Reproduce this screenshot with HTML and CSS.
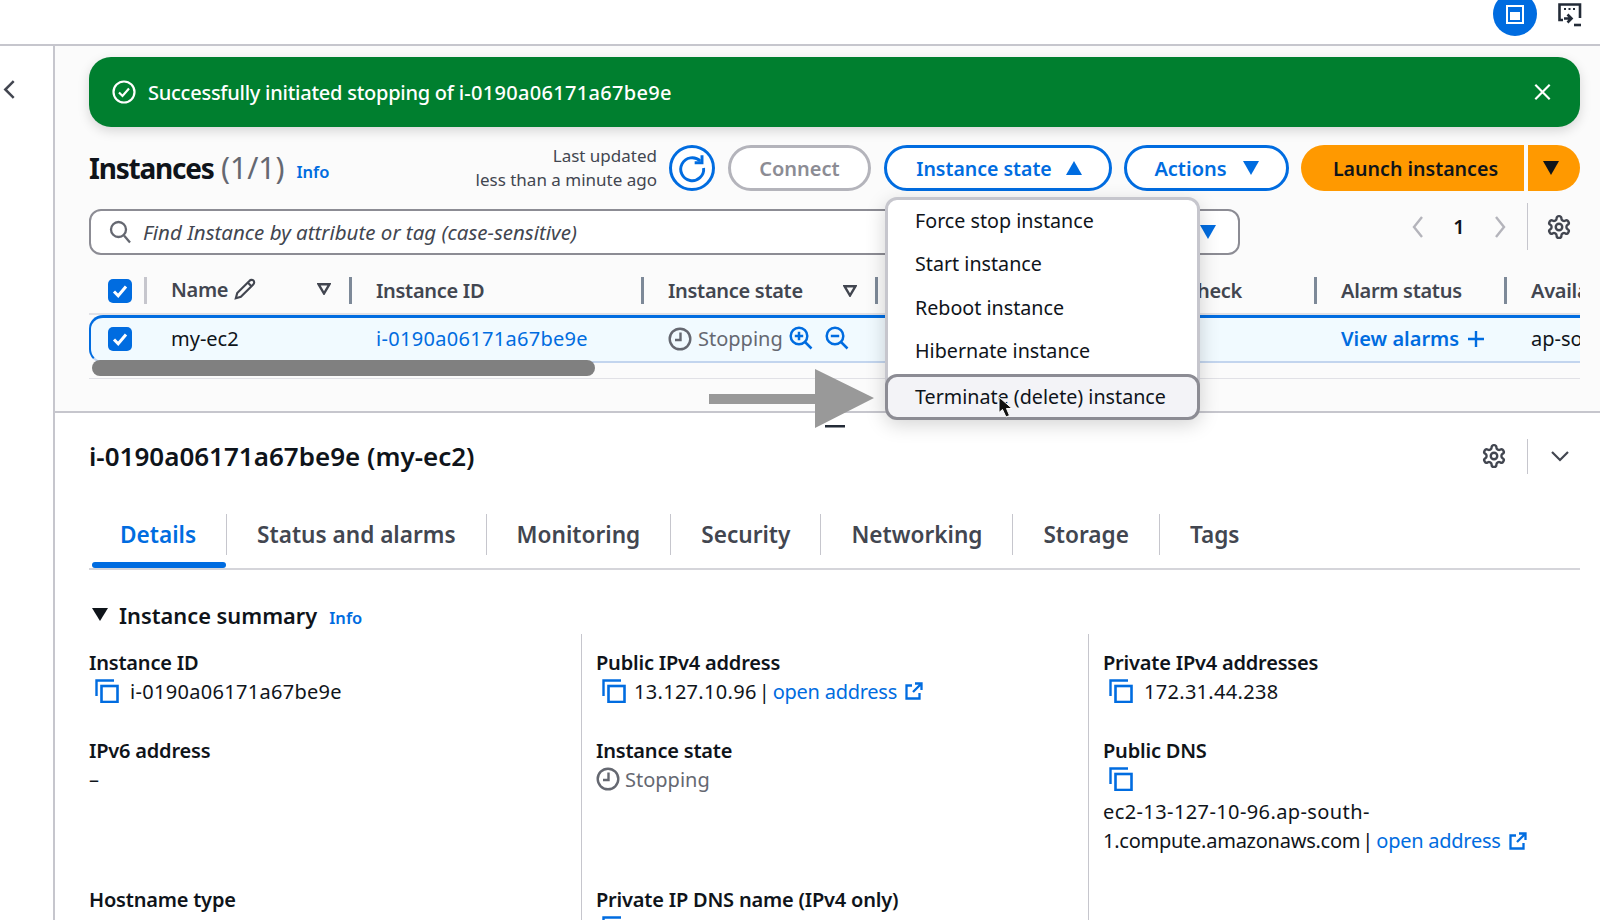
FILE: index.html
```html
<!DOCTYPE html>
<html lang="en">
<head>
    <meta charset="UTF-8">
    <title>Instances | EC2</title>
    <link rel="stylesheet" href="styles.css">
</head>
<body>

<svg class="icon-defs" aria-hidden="true">
    <symbol id="i-copy" viewBox="0 0 24 24"><path d="M1.5 17V1.5H19" fill="none" stroke="currentColor" stroke-width="2.4"/><rect x="6.5" y="7" width="16" height="16" fill="none" stroke="currentColor" stroke-width="2.6"/></symbol>
    <symbol id="i-ext" viewBox="0 0 18 18"><path d="M7 3.5H1.5V16.5H14.5V11M8 10L16 2M10 1.5H16.5V8" fill="none" stroke="currentColor" stroke-width="2.3"/></symbol>
    <symbol id="i-clock" viewBox="0 0 24 24"><circle cx="12" cy="12" r="10.3" fill="none" stroke="currentColor" stroke-width="2.4"/><path d="M12.5 5.5V13H7" fill="none" stroke="currentColor" stroke-width="2.4"/></symbol>
    <symbol id="i-gear" viewBox="0 0 24 24"><path d="M12.22 2h-.44a2 2 0 0 0-2 2v.18a2 2 0 0 1-1 1.73l-.43.25a2 2 0 0 1-2 0l-.15-.08a2 2 0 0 0-2.73.73l-.22.38a2 2 0 0 0 .73 2.73l.15.1a2 2 0 0 1 1 1.72v.51a2 2 0 0 1-1 1.74l-.15.09a2 2 0 0 0-.73 2.73l.22.38a2 2 0 0 0 2.73.73l.15-.08a2 2 0 0 1 2 0l.43.25a2 2 0 0 1 1 1.73V20a2 2 0 0 0 2 2h.44a2 2 0 0 0 2-2v-.18a2 2 0 0 1 1-1.73l.43-.25a2 2 0 0 1 2 0l.15.08a2 2 0 0 0 2.73-.73l.22-.39a2 2 0 0 0-.73-2.73l-.15-.08a2 2 0 0 1-1-1.74v-.5a2 2 0 0 1 1-1.74l.15-.09a2 2 0 0 0 .73-2.73l-.22-.38a2 2 0 0 0-2.73-.73l-.15.08a2 2 0 0 1-2 0l-.43-.25a2 2 0 0 1-1-1.73V4a2 2 0 0 0-2-2z" fill="none" stroke="currentColor" stroke-width="2.2"/><circle cx="12" cy="12" r="3" fill="none" stroke="currentColor" stroke-width="2.2"/></symbol>
    <symbol id="i-check" viewBox="0 0 24 24"><rect width="24" height="24" rx="5" fill="#006ce0"/><path d="M6 12.5l4.2 4.2L18 7.5" fill="none" stroke="#fff" stroke-width="3"/></symbol>
    <symbol id="i-filter" viewBox="0 0 14 12"><path d="M1.5 1.2H12.5L7 10.5Z" fill="none" stroke="currentColor" stroke-width="2.4"/></symbol>
</svg>

<div class="page">
    <header class="topbar">
        <svg class="top-circle" viewBox="0 0 44 44">
            <circle cx="22" cy="22" r="22" fill="#006ce0"/>
            <rect x="13" y="13" width="18" height="19" fill="#fff"/>
            <rect x="15" y="15" width="14" height="15" fill="#006ce0"/>
            <rect x="17" y="20" width="10" height="8" fill="#fff"/>
        </svg>
        <svg class="top-shell" viewBox="0 0 24 24" fill="none" stroke="#232b37" stroke-width="2.6">
            <path d="M5 17H1.5V1.5H22V15"/>
            <path d="M6 6h2M10.5 6h2M15 6h2" stroke-width="2"/>
            <path d="M6 15.5h7M9.500 11.500l4 4-4 4"/>
            <path d="M16 22h7"/>
        </svg>
    </header>

    <div class="layout">
        <aside class="sidebar">
            <svg class="side-back" viewBox="0 0 12 20"><path d="M10 2L2 10l8 8" fill="none" stroke="#424650" stroke-width="2.4"/></svg>
        </aside>

        <main class="content">
            <section class="upper">
                <div class="flash">
                    <svg class="flash-icon" viewBox="0 0 24 24" fill="none" stroke="#fff" stroke-width="2.2"><circle cx="12" cy="12" r="10.5"/><path d="M7 12.5l3.500 3.500L17 8.500"/></svg>
                    <span class="flash-text">Successfully initiated stopping of <span class="id">i-0190a06171a67be9e</span></span>
                    <svg class="flash-close" viewBox="0 0 20 20"><path d="M2 2l16 16M18 2L2 18" stroke="#fff" stroke-width="2.4"/></svg>
                </div>

                <div class="head-row">
                    <h1 class="page-title"><span class="title-word">Instances</span> <span class="count">(1/1)</span></h1>
                    <a class="info info-title">Info</a>
                    <div class="updated">Last updated<br>less than a minute ago</div>
                    <button class="refresh">
                        <svg viewBox="0 0 24 24" fill="none" stroke="#006ce0" stroke-width="2.2"><path d="M18.2 6.800A8.600 8.600 0 1 0 20.700 12"/><path d="M19.500 2.500V8H14"/></svg>
                    </button>
                    <button class="btn btn-off">Connect</button>
                    <div class="menu-anchor">
                        <button class="btn btn-state">Instance state <svg class="caret" viewBox="0 0 16 14"><path d="M8 0l8 14H0z" fill="currentColor"/></svg></button>
                        <ul class="menu">
                            <li>Force stop instance</li>
                            <li>Start instance</li>
                            <li>Reboot instance</li>
                            <li>Hibernate instance</li>
                            <li class="menu-hover">Terminate (delete) instance</li>
                        </ul>
                    </div>
                    <button class="btn btn-actions">Actions <svg class="caret" viewBox="0 0 16 14"><path d="M8 14L16 0H0z" fill="currentColor"/></svg></button>
                    <div class="launch">
                        <button class="launch-main">Launch instances</button>
                        <button class="launch-more"><svg class="caret" viewBox="0 0 16 14"><path d="M8 14L16 0H0z" fill="currentColor"/></svg></button>
                    </div>
                </div>

                <div class="search-row">
                    <div class="search">
                        <svg class="search-icon" viewBox="0 0 22 24" fill="none" stroke="#656871" stroke-width="2.3"><circle cx="9.500" cy="9.500" r="7.500"/><path d="M15 15.500l6 7"/></svg>
                        <span class="search-hint">Find Instance by attribute or tag (case-sensitive)</span>
                        <svg class="caret search-caret" viewBox="0 0 16 14"><path d="M8 14L16 0H0z" fill="currentColor"/></svg>
                    </div>
                    <div class="pager">
                        <svg class="pager-arrow" viewBox="0 0 12 24"><path d="M10 2L2 12l8 10" fill="none" stroke="#b4b4bb" stroke-width="2.4"/></svg>
                        <span class="pager-num">1</span>
                        <svg class="pager-arrow" viewBox="0 0 12 24"><path d="M2 2l8 10-8 10" fill="none" stroke="#b4b4bb" stroke-width="2.4"/></svg>
                        <span class="pager-sep"></span>
                        <svg class="gear"><use href="#i-gear"/></svg>
                    </div>
                </div>

                <div class="table">
                    <div class="t-row t-head">
                        <div class="cell cell-check cell-light"><svg class="check"><use href="#i-check"/></svg></div>
                        <div class="cell cell-name">Name
                            <svg class="pencil" viewBox="0 0 24 24" fill="none" stroke="#424650" stroke-width="2.3"><path d="M17 3a2.850 2.830 0 1 1 4 4L7.500 20.500 2 22l1.500-5.500Z"/><path d="M15 5l4 4"/></svg>
                            <svg class="filter"><use href="#i-filter"/></svg>
                        </div>
                        <div class="cell">Instance ID</div>
                        <div class="cell">Instance state <svg class="filter"><use href="#i-filter"/></svg></div>
                        <div class="cell cell-end">Status check</div>
                        <div class="cell">Alarm status</div>
                        <div class="cell cell-last">Availability Zone</div>
                    </div>
                    <div class="t-row t-body">
                        <div class="cell-plain cell-check"><svg class="check"><use href="#i-check"/></svg></div>
                        <div class="cell-plain">my-ec2</div>
                        <div class="cell-plain"><a class="link id">i-0190a06171a67be9e</a></div>
                        <div class="cell-plain cell-state">
                            <svg class="clock"><use href="#i-clock"/></svg>
                            <span class="muted">Stopping</span>
                            <svg class="lens" viewBox="0 0 24 24" fill="none" stroke="#006ce0" stroke-width="2.5"><circle cx="10" cy="10" r="8.300"/><path d="M16 16l6.500 6.500M5.800 10h8.400M10 5.800v8.400"/></svg>
                            <svg class="lens" viewBox="0 0 24 24" fill="none" stroke="#006ce0" stroke-width="2.5"><circle cx="10" cy="10" r="8.300"/><path d="M16 16l6.500 6.500M5.800 10h8.400"/></svg>
                        </div>
                        <div class="cell-plain"></div>
                        <div class="cell-plain"><a class="link link-strong">View alarms</a> <svg class="plus" viewBox="0 0 18 18"><path d="M9 1v16M1 9h16" stroke="#006ce0" stroke-width="2.4"/></svg></div>
                        <div class="cell-plain cell-last">ap-south-1a</div>
                    </div>
                    <div class="scrollbar"><div class="scroll-thumb"></div></div>
                </div>
            </section>

            <section class="lower">
                <div class="detail-head">
                    <h2 class="detail-title">i-0190a06171a67be9e (my-ec2)</h2>
                    <div class="detail-tools">
                        <svg class="gear"><use href="#i-gear"/></svg>
                        <span class="tool-sep"></span>
                        <svg class="tool-chevron" viewBox="0 0 20 12"><path d="M2 2l8 8 8-8" fill="none" stroke="#424650" stroke-width="2.2"/></svg>
                    </div>
                </div>

                <nav class="tabs">
                    <a class="tab tab-active">Details</a>
                    <a class="tab">Status and alarms</a>
                    <a class="tab">Monitoring</a>
                    <a class="tab">Security</a>
                    <a class="tab">Networking</a>
                    <a class="tab">Storage</a>
                    <a class="tab tab-last">Tags</a>
                </nav>

                <div class="summary-head">
                    <svg class="summary-caret" viewBox="0 0 16 13"><path d="M8 13L16 0H0z" fill="#0f141a"/></svg>
                    <h3 class="summary-title">Instance summary</h3>
                    <a class="info">Info</a>
                </div>

                <div class="summary">
                    <div class="col">
                        <div class="item">
                            <div class="label">Instance ID</div>
                            <div class="value"><svg class="copy"><use href="#i-copy"/></svg><span class="id">i-0190a06171a67be9e</span></div>
                        </div>
                        <div class="item item-tall">
                            <div class="label">IPv6 address</div>
                            <div class="value">–</div>
                        </div>
                        <div class="item">
                            <div class="label">Hostname type</div>
                        </div>
                    </div>
                    <div class="col">
                        <div class="item">
                            <div class="label">Public IPv4 address</div>
                            <div class="value"><svg class="copy copy-tight"><use href="#i-copy"/></svg><span class="id">13.127.10.96</span><span class="pipe">|</span><a class="link link-open">open address</a><svg class="ext"><use href="#i-ext"/></svg></div>
                        </div>
                        <div class="item item-tall">
                            <div class="label">Instance state</div>
                            <div class="value muted"><svg class="clock clock-small"><use href="#i-clock"/></svg>Stopping</div>
                        </div>
                        <div class="item">
                            <div class="label">Private IP DNS name (IPv4 only)</div>
                            <div class="value"><svg class="copy"><use href="#i-copy"/></svg></div>
                        </div>
                    </div>
                    <div class="col col-last">
                        <div class="item">
                            <div class="label">Private IPv4 addresses</div>
                            <div class="value"><svg class="copy"><use href="#i-copy"/></svg><span class="id">172.31.44.238</span></div>
                        </div>
                        <div class="item item-tall">
                            <div class="label">Public DNS</div>
                            <div class="value"><svg class="copy"><use href="#i-copy"/></svg></div>
                            <div class="dns"><span class="dns-host">ec2-13-127-10-96.ap-south-</span><br><span class="dns-domain">1.compute.amazonaws.com</span><span class="pipe">|</span><a class="link link-open">open address</a><svg class="ext"><use href="#i-ext"/></svg></div>
                        </div>
                    </div>
                </div>
            </section>
        </main>
    </div>

    <!-- annotation drawn over the screenshot -->
    <svg class="pointer-arrow" viewBox="0 0 170 62">
        <path d="M1 27H107V2L166 31L107 61V37H1Z" fill="#999"/>
        <rect x="117" y="58" width="20" height="2.500" fill="#232b37"/>
    </svg>
    <svg class="mouse" viewBox="0 0 15 22"><path d="M1 1V16.500L4.500 13.500L8 21L11.500 19.500L8.500 12.500H14Z" fill="#111" stroke="#fff" stroke-width="1"/></svg>
</div>

</body>
</html>
```

FILE: styles.css
```css
* {
    box-sizing: border-box;
}

html, body {
    margin: 0;
    height: 100%;
    overflow: hidden;
}

body {
    font-family: 'Noto Sans', 'Open Sans', sans-serif;
    font-size: 20px;
    color: #0f141a;
    background-color: #fff;
}

h1, h2, h3, ul {
    margin: 0;
    padding: 0;
}

button {
    font-family: inherit;
    cursor: pointer;
}

.icon-defs {
    display: none;
}

.page {
    position: relative;
    display: flex;
    flex-direction: column;
    height: 920px;
    overflow: hidden;
}

.id {
    letter-spacing: 0.3px;
}

/* top bar */
.topbar {
    flex: none;
    display: flex;
    justify-content: flex-end;
    align-items: flex-end;
    height: 46px;
    padding: 0 18px 8px 0;
    border-bottom: 2px solid #c6c6cd;
    overflow: hidden;
}

.top-circle {
    width: 44px;
    height: 44px;
    flex: none;
}

.top-shell {
    width: 24px;
    height: 24px;
    flex: none;
    margin: 0 0 9px 21px;
}

.layout {
    flex: 1;
    display: flex;
    min-height: 0;
}

.sidebar {
    flex: none;
    width: 55px;
    padding: 33px 0 0 3px;
    border-right: 2px solid #c6c6cd;
}

.side-back {
    display: block;
    width: 13px;
    height: 21px;
}

.content {
    flex: 1;
    min-width: 0;
    display: flex;
    flex-direction: column;
}

/* upper part with the table */
.upper {
    flex: none;
    height: 367px;
    padding: 11px 20px 0 34px;
    background-color: #fbfbfb;
    border-bottom: 2px solid #c6c6cd;
}

.flash {
    display: flex;
    align-items: center;
    height: 70px;
    padding: 0 28px 0 23px;
    border-radius: 22px;
    background-color: #007f2f;
    color: #fff;
    box-shadow: 0 4px 12px rgba(0, 0, 0, 0.15);
}

.flash-icon {
    width: 24px;
    height: 24px;
    flex: none;
}

.flash-text {
    margin-left: 12px;
    font-weight: 500;
    letter-spacing: -0.25px;
}

.flash-close {
    width: 19px;
    height: 18px;
    margin-left: auto;
}

.head-row {
    display: flex;
    align-items: center;
    height: 46px;
    margin-top: 18px;
}

.page-title {
    margin-top: -2px;
    font-size: 28px;
    font-weight: 700;
}

.title-word {
    letter-spacing: -1.2px;
}

.count {
    font-size: 30px;
    font-weight: 400;
    color: #656871;
}

.info {
    font-size: 16.5px;
    font-weight: 600;
    color: #006ce0;
}

.info-title {
    margin: 6px 0 0 12px;
}

.updated {
    margin-left: auto;
    font-size: 17px;
    line-height: 24px;
    text-align: right;
    color: #424650;
}

.refresh {
    flex: none;
    display: flex;
    align-items: center;
    justify-content: center;
    width: 46px;
    height: 46px;
    margin-left: 12px;
    padding: 0;
    border: 3px solid #006ce0;
    border-radius: 50%;
    background-color: #fff;
}

.refresh svg {
    width: 32px;
    height: 32px;
}

.btn {
    display: flex;
    align-items: center;
    justify-content: center;
    gap: 16px;
    height: 46px;
    width: 228px;
    border: 3px solid #006ce0;
    border-radius: 23px;
    background-color: #fff;
    color: #006ce0;
    font-size: 20px;
    font-weight: 600;
}

.btn-state {
    gap: 14px;
    padding: 0 0 0 2px;
    font-size: 19.5px;
}

.btn-off {
    width: 143px;
    margin: 0 13px;
    border-color: #b4b4bb;
    color: #8c8c94;
}

.btn-actions {
    width: 165px;
    margin: 0 12px;
}

.caret {
    width: 16px;
    height: 14px;
    flex: none;
}

.menu-anchor {
    position: relative;
}

.menu {
    position: absolute;
    top: 52px;
    left: 1px;
    z-index: 5;
    width: 315px;
    height: 221px;
    list-style: none;
    border: 3px solid #c6c6cd;
    border-radius: 12px;
    background-color: #fff;
    box-shadow: 0 6px 20px rgba(0, 0, 0, 0.18);
    font-size: 19.7px;
}

.menu li {
    height: 43.4px;
    padding-left: 27px;
    line-height: 41px;
    white-space: nowrap;
}

.menu .menu-hover {
    height: 46px;
    margin: 0 -3px;
    padding-left: 27px;
    border: 3px solid #8c8c94;
    border-radius: 12px;
    background-color: #f3f3f7;
    line-height: 40px;
}

.launch {
    display: flex;
    height: 46px;
    width: 279px;
    flex: none;
    gap: 4px;
}

.launch-main,
.launch-more {
    border: none;
    background-color: #ff9900;
    color: #0f141a;
}

.launch-main {
    flex: 1;
    padding: 0 0 0 6px;
    border-radius: 23px 0 0 23px;
    font-size: 19.6px;
    font-weight: 600;
}

.launch-more {
    display: flex;
    align-items: center;
    justify-content: center;
    width: 52px;
    padding: 0 6px 0 0;
    border-radius: 0 23px 23px 0;
}

/* search row */
.search-row {
    display: flex;
    justify-content: space-between;
    align-items: flex-start;
    margin-top: 18px;
}

.search {
    display: flex;
    align-items: center;
    width: 1151px;
    height: 46px;
    padding-left: 18px;
    padding-right: 22px;
    border: 2px solid #8c8c94;
    border-radius: 12px;
    background-color: #fff;
}

.search-icon {
    width: 22px;
    height: 24px;
    flex: none;
}

.search-hint {
    margin-left: 12px;
    font-size: 20.5px;
    font-style: italic;
    color: #424650;
}

.search-caret {
    margin-left: auto;
    color: #006ce0;
}

.pager {
    display: flex;
    align-items: center;
    height: 47px;
    margin-top: -6px;
    padding-right: 8px;
}

.pager-arrow {
    width: 12px;
    height: 24px;
    flex: none;
}

.pager-num {
    width: 70px;
    text-align: center;
    font-weight: 600;
}

.pager-sep {
    width: 1px;
    height: 47px;
    margin: 0 18px 0 21px;
    background-color: #c6c6cd;
}

.gear {
    width: 26px;
    height: 26px;
    flex: none;
    color: #424650;
}

/* table */
.table {
    margin-top: 22px;
    overflow: hidden;
}

.t-row {
    display: grid;
    grid-template-columns: 58px 205px 292px 234px 439px 190px 1fr;
}

.t-head {
    height: 38px;
    border-bottom: 2px solid #e1e1e6;
    font-weight: 600;
    color: #424650;
}

.cell {
    display: flex;
    align-items: center;
    height: 27px;
    padding-left: 24px;
    border-right: 3px solid #7d8998;
    white-space: nowrap;
    font-size: 20px;
    letter-spacing: -0.3px;
}

.cell-light {
    border-right-color: #c6c6cd;
}

.cell-check {
    padding-left: 19px;
}

.cell-name {
    padding-bottom: 3px;
}

.cell-last {
    border-right: none;
    overflow: hidden;
}

.cell-end {
    justify-content: flex-end;
    padding-right: 72px;
}

.check {
    width: 24px;
    height: 24px;
    flex: none;
}

.pencil {
    width: 22px;
    height: 22px;
    margin-left: 6px;
}

.filter {
    width: 14px;
    height: 12px;
    margin-left: auto;
    margin-right: 18px;
    color: #424650;
}

.t-body {
    height: 48px;
    padding-bottom: 2px;
    align-items: center;
    border-top: 3px solid #006ce0;
    border-left: 2px solid #006ce0;
    border-bottom: 2px solid #c3d5ee;
    border-top-left-radius: 14px;
    border-bottom-left-radius: 14px;
    background-color: #f1faff;
    grid-template-columns: 56px 205px 292px 234px 439px 190px 1fr;
}

.cell-plain {
    display: flex;
    align-items: center;
    padding-left: 24px;
    white-space: nowrap;
}

.t-body .cell-check {
    padding-left: 17px;
}

.t-body .cell-last {
    overflow: hidden;
}

.cell-state {
    gap: 6px;
}

.clock {
    width: 24px;
    height: 24px;
    flex: none;
    color: #656871;
}

.lens {
    width: 24px;
    height: 24px;
    margin: -2px 6px 0 0;
    flex: none;
}

.muted {
    color: #656871;
}

.link {
    color: #006ce0;
}

.link-strong {
    font-weight: 600;
}

.link-open {
    letter-spacing: -0.25px;
}

.plus {
    width: 18px;
    height: 18px;
    margin-left: 8px;
}

.scrollbar {
    margin-top: -3px;
    height: 19px;
    border-bottom: 1px solid #e1e1e6;
}

.scroll-thumb {
    width: 503px;
    height: 16px;
    margin-left: 3px;
    border-radius: 8px;
    background-color: #808080;
}

/* lower part */
.lower {
    flex: 1;
    min-height: 0;
    display: flex;
    flex-direction: column;
    padding: 25px 20px 0 34px;
}

.detail-head {
    display: flex;
    justify-content: space-between;
    align-items: center;
    height: 38px;
}

.detail-title {
    font-size: 26px;
    font-weight: 600;
}

.detail-tools {
    display: flex;
    align-items: center;
    gap: 20px;
    margin-right: 10px;
}

.tool-sep {
    width: 1px;
    height: 35px;
    background-color: #c6c6cd;
}

.tool-chevron {
    width: 20px;
    height: 12px;
    margin-left: 2px;
}

.tabs {
    flex: none;
    display: flex;
    height: 56px;
    margin-top: 40px;
    border-bottom: 2px solid #d5d5da;
}

.tab {
    position: relative;
    height: 41px;
    padding: 0 30px;
    border-right: 1px solid #c6c6cd;
    font-size: 22.6px;
    font-weight: 600;
    line-height: 41px;
    color: #424650;
    white-space: nowrap;
}

.tab-last {
    border-right: none;
}

.tab-active {
    padding-left: 31px;
    color: #006ce0;
}

.tab-active::after {
    content: '';
    position: absolute;
    left: 3px;
    right: 0;
    top: 48px;
    height: 6px;
    border-radius: 3px;
    background-color: #006ce0;
}

.summary-head {
    display: flex;
    align-items: center;
    height: 30px;
    margin-top: 31px;
}

.summary-caret {
    width: 16px;
    height: 13px;
    margin: -3px 11px 0 3px;
}

.summary-title {
    font-size: 21.8px;
    font-weight: 600;
}

.summary-head .info {
    margin: 4px 0 0 12px;
}

.summary {
    flex: 1;
    display: grid;
    grid-template-columns: 493px 507px 1fr;
    margin-top: 4px;
}

.col {
    display: flex;
    flex-direction: column;
    gap: 30px;
    padding: 14px 0 0 14px;
    border-right: 1px solid #c6c6cd;
}

.col:first-child {
    padding-left: 0;
}

.col-last {
    border-right: none;
}

.item-tall {
    min-height: 119px;
}

.label {
    height: 30px;
    line-height: 30px;
    font-weight: 600;
    letter-spacing: -0.2px;
    white-space: nowrap;
}

.value {
    display: flex;
    align-items: center;
    height: 30px;
    margin-top: -2px;
    white-space: nowrap;
}

.copy {
    width: 24px;
    height: 24px;
    margin: 0 11px 0 6px;
    flex: none;
    color: #006ce0;
}

.copy-tight {
    margin-right: 8px;
}

.clock-small {
    margin-right: 5px;
}

.pipe {
    margin: 0 3px 0 2px;
}

.ext {
    width: 18px;
    height: 18px;
    margin-left: 8px;
    color: #006ce0;
    vertical-align: -2px;
}

.dns {
    margin-top: 3px;
    line-height: 29px;
    white-space: nowrap;
}

.dns-host {
    letter-spacing: 0.4px;
}

.dns-domain {
    letter-spacing: -0.25px;
}

/* annotation */
.pointer-arrow {
    position: absolute;
    left: 708px;
    top: 367px;
    z-index: 6;
    width: 170px;
    height: 62px;
}

.mouse {
    position: absolute;
    left: 998px;
    top: 396px;
    z-index: 7;
    width: 15px;
    height: 22px;
}
```
